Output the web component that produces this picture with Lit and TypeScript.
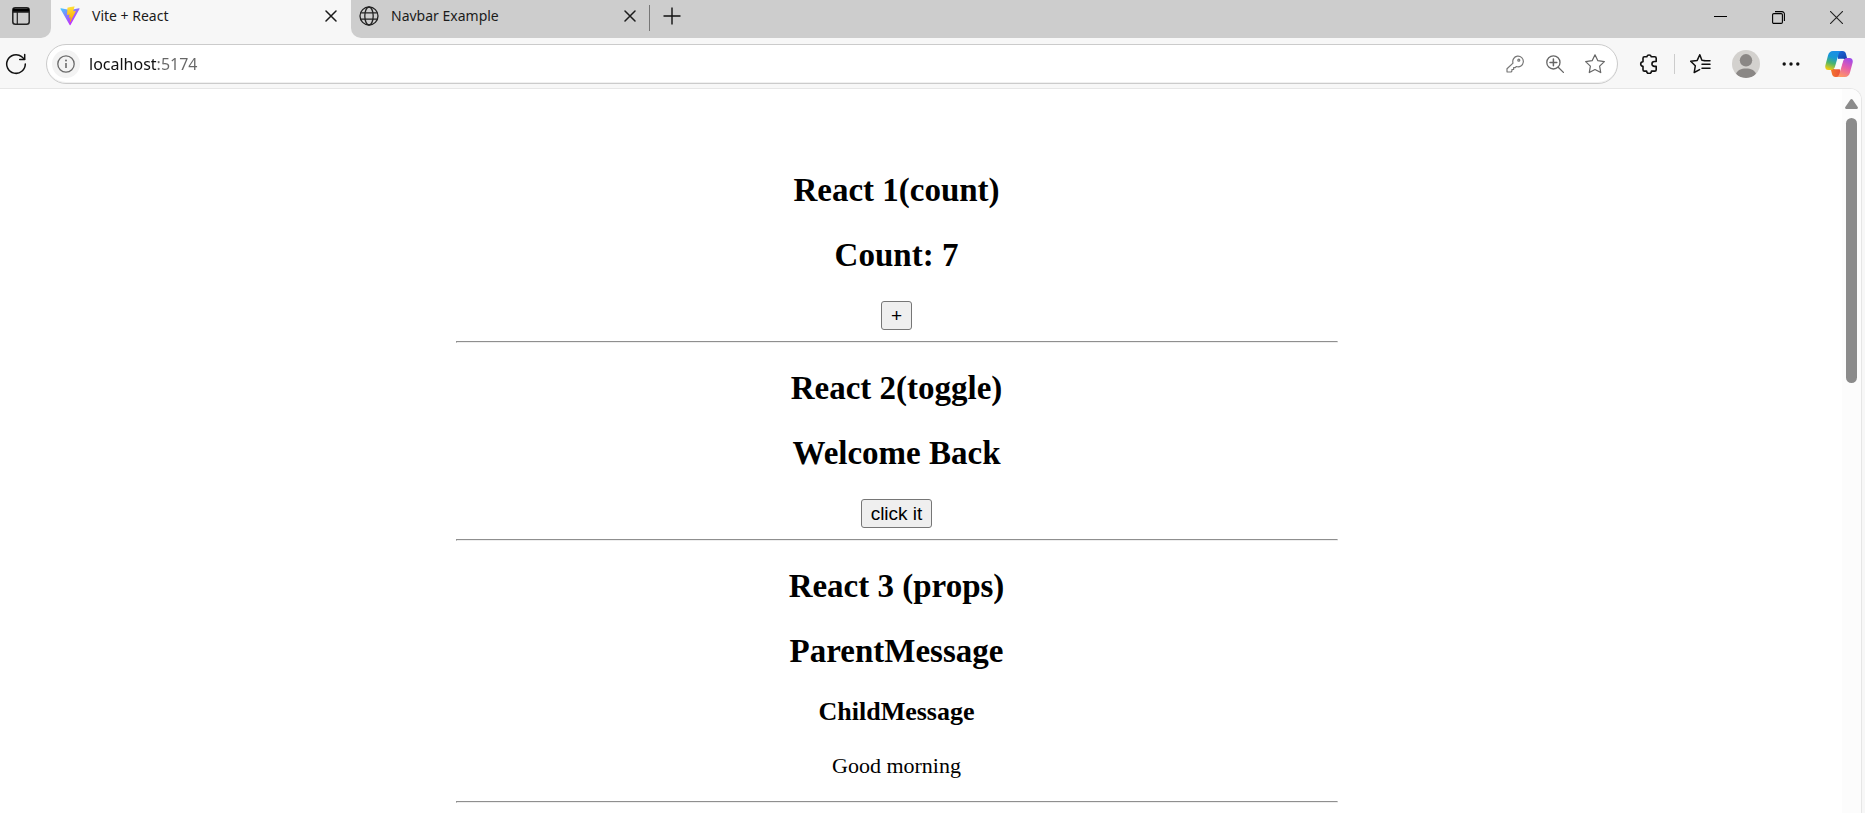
import { LitElement, html, css, svg } from "lit";
import { customElement, property, state } from "lit/decorators.js";

const closeIcon = html`<svg width="12" height="12" viewBox="0 0 12 12" fill="none" stroke="#1b1b1b" stroke-width="1.5" stroke-linecap="round"><path d="M1 1l10 10M11 1L1 11" /></svg>`;

const viteIcon = html`<svg width="20" height="20" viewBox="0 0 410 404" fill="none">
  <defs>
    <linearGradient id="v1" x1="6" y1="33" x2="235" y2="344" gradientUnits="userSpaceOnUse"><stop stop-color="#41d1ff" /><stop offset="1" stop-color="#bd34fe" /></linearGradient>
    <linearGradient id="v2" x1="194" y1="9" x2="236" y2="293" gradientUnits="userSpaceOnUse"><stop stop-color="#ffea83" /><stop offset="0.083" stop-color="#ffdd35" /><stop offset="1" stop-color="#ffa800" /></linearGradient>
  </defs>
  <path fill="url(#v1)" d="M399.641 59.525L215.643 388.545C211.844 395.338 202.084 395.378 198.228 388.618L10.582 59.556C6.381 52.19 12.68 43.267 21.028 44.759L205.223 77.682C206.398 77.892 207.601 77.89 208.776 77.676L389.119 44.806C397.439 43.289 403.768 52.143 399.641 59.525Z" />
  <path fill="url(#v2)" d="M292.965 1.574L156.801 28.255C154.563 28.694 152.906 30.59 152.771 32.866L144.395 174.33C144.198 177.662 147.258 180.248 150.51 179.498L188.42 170.749C191.967 169.931 195.172 173.055 194.443 176.622L183.18 231.775C182.422 235.487 185.907 238.661 189.532 237.56L212.947 230.446C216.577 229.344 220.065 232.527 219.297 236.242L201.398 322.875C200.278 328.294 207.486 331.249 210.492 326.603L212.5 323.5L323.454 102.072C325.312 98.365 322.108 94.137 318.036 94.923L279.014 102.454C275.347 103.161 272.227 99.746 273.262 96.158L298.731 7.867C299.767 4.273 296.636 0.855 292.965 1.574Z" />
</svg>`;

const globeIcon = html`<svg width="20" height="20" viewBox="0 0 20 20" fill="none" stroke="#222" stroke-width="1.3"><circle cx="10" cy="10" r="9" /><ellipse cx="10" cy="10" rx="4.2" ry="9" /><path d="M1.6 6.9h16.8M1.6 13.1h16.8" /></svg>`;

const starPath = svg`<path d="M10 1.6l2.6 5.4 5.9.8-4.3 4.1 1 5.9L10 15l-5.2 2.8 1-5.9L1.5 7.8 7.4 7z" />`;

@customElement("browser-tab")
export class BrowserTab extends LitElement {
  static styles = css`
    :host { display: flex; align-items: center; height: 32px; box-sizing: border-box; }
    .title { flex: 1; margin-left: 12px; font: 14px/20px "Noto Sans", "Open Sans", sans-serif; color: #1b1b1b; white-space: nowrap; }
    .icon, .close { display: flex; }
    .close { border: 0; padding: 4px; background: none; }
  `;
  @property() label = "";
  @property() icon = "";
  render() {
    return html`
      <span class="icon">${this.icon === "vite" ? viteIcon : globeIcon}</span>
      <span class="title">${this.label}</span>
      <button class="close" aria-label="Close tab">${closeIcon}</button>
    `;
  }
}

@customElement("browser-tab-strip")
export class BrowserTabStrip extends LitElement {
  static styles = css`
    :host { display: flex; height: 38px; background: #f7f7f7; }
    button { border: 0; padding: 0; background: none; display: flex; align-items: center; justify-content: center; }
    .start { width: 51px; background: #cdcdcd; border-radius: 0 0 10px 0; display: flex; }
    .start button { width: 42px; height: 32px; }
    .active { width: 300px; padding: 0 10px 0 9px; }
    .rest { flex: 1; display: flex; background: #cdcdcd; border-radius: 0 0 0 10px; }
    .other { width: 298px; padding: 0 9px 0 8px; }
    .divider { width: 1px; height: 26px; margin-top: 5px; background: #777; }
    .new { width: 43px; height: 32px; }
    .window { margin-left: auto; display: flex; }
    .window button { width: 58px; height: 34px; }
  `;
  render() {
    return html`
      <div class="start">
        <button aria-label="Tab actions">
          <svg width="18" height="18" viewBox="0 0 18 18" fill="none" stroke="#222" stroke-width="1.5"><rect x="0.8" y="0.8" width="16.4" height="16.4" rx="2.5" /><path d="M1 1.5h16v3.6H1z" fill="#000" stroke="none" /><path d="M1 5h16" /><path d="M5.3 5v12" stroke-width="1.2" /></svg>
        </button>
      </div>
      <browser-tab class="active" label="Vite + React" icon="vite"></browser-tab>
      <div class="rest">
        <browser-tab class="other" label="Navbar Example" icon="globe"></browser-tab>
        <div class="divider"></div>
        <button class="new" aria-label="New tab"><svg width="18" height="18" viewBox="0 0 18 18" stroke="#111" stroke-width="1.4"><path d="M9 .5v17M.5 9h17" /></svg></button>
        <div class="window">
          <button aria-label="Minimize"><svg width="13" height="13" viewBox="0 0 13 13" stroke="#000"><path d="M0 5.5h13" /></svg></button>
          <button aria-label="Restore"><svg width="13" height="13" viewBox="0 0 13 13" fill="none" stroke="#000" stroke-width="1.1"><rect x=".6" y="2.6" width="9.8" height="9.8" rx="1.2" /><path d="M3 .6h7a2.4 2.4 0 0 1 2.4 2.4v7" /></svg></button>
          <button aria-label="Close"><svg width="13" height="13" viewBox="0 0 13 13" stroke="#222" stroke-width="1.1"><path d="M0 0l13 13M13 0L0 13" /></svg></button>
        </div>
      </div>
    `;
  }
}

@customElement("browser-toolbar")
export class BrowserToolbar extends LitElement {
  static styles = css`
    :host { display: flex; align-items: center; padding: 6px 0 5px; background: #f7f7f7; }
    button { border: 0; padding: 0; background: none; display: flex; align-items: center; justify-content: center; width: 46px; height: 36px; flex: none; }
    .reload { width: 32px; margin-right: 14px; }
    .address { flex: 1; display: flex; align-items: center; height: 40px; margin-right: 8px; box-sizing: border-box; border: 1px solid #cbcbcb; border-radius: 20px; background: #fff; padding: 0 2px 0 5px; box-shadow: inset 0 -1px 0 #f0f0f0; }
    .address button { width: 40px; }
    .address .info { width: 28px; height: 28px; border-radius: 50%; background: #f3f3f3; }
    .url { flex: 1; min-width: 0; border: 0; outline: 0; padding: 0; margin-left: 9px; font: 16px/24px "Noto Sans", "Open Sans", sans-serif; color: transparent; background: linear-gradient(to right, #111 68px, #666 68px) text; }
    .divider { width: 1px; height: 20px; margin: 0 2px; background: #ccc; }
    .slot { width: 45px; }
    .copilot { width: 52px; }
  `;
  render() {
    return html`
      <button class="reload" aria-label="Reload"><svg width="22" height="22" viewBox="0 0 22 22" fill="none" stroke="#111" stroke-width="1.5" stroke-linecap="round" stroke-linejoin="round"><path d="M20.3 11a9.3 9.3 0 1 1-3.6-7.3l2.8 2.6" /><path d="M19.7 1.6v4.9h-5" /></svg></button>
      <div class="address">
        <button class="info" aria-label="Site information"><svg width="18" height="18" viewBox="0 0 18 18" fill="none" stroke="#6b6b6b" stroke-width="1.3"><circle cx="9" cy="9" r="8.2" /><path d="M9 8v5" stroke-width="1.6" /><circle cx="9" cy="5.6" r="1" fill="#6b6b6b" stroke="none" /></svg></button>
        <input class="url" aria-label="Address" value="localhost:5174" />
        <button aria-label="Passwords"><svg width="18" height="18" viewBox="0 0 18 18" fill="none" stroke="#777" stroke-width="1.2" stroke-linejoin="round"><path d="M11.4 1.2a5.3 5.3 0 1 1-1 10.3L9.2 12.7H7.6v1.8H5.9v1.6L5.1 17H1.6a.6.6 0 0 1-.6-.6v-2.6l6-5.7A5.4 5.4 0 0 1 11.4 1.2z" /><circle cx="12.8" cy="5.2" r="1" /></svg></button>
        <button aria-label="Zoom"><svg width="18" height="18" viewBox="0 0 18 18" fill="none" stroke="#666" stroke-width="1.3" stroke-linecap="round"><circle cx="7.4" cy="7.4" r="6.6" /><path d="M12.2 12.2l5.2 5.2" /><path d="M7.4 4v6.8M4 7.4h6.8" stroke-width="1.5" /></svg></button>
        <button aria-label="Favorite"><svg width="22" height="22" viewBox="0 0 20 20" fill="none" stroke="#666" stroke-width="1.1" stroke-linejoin="round">${starPath}</svg></button>
      </div>
      <button aria-label="Extensions"><svg width="20" height="20" viewBox="0 0 20 20" fill="none" stroke="#111" stroke-width="1.6" stroke-linejoin="round"><path d="M5.400 2.800h2.400a2.300 2.300 0 0 1 4.500 0h3.500c.9 0 1.400.6 1.400 1.400v3.300h-1.800a2.400 2.400 0 0 0 0 4.900h1.800v3.300c0 .9-.5 1.400-1.400 1.400h-3.300a2.300 2.300 0 0 1-4.900 0H5.400c-.9 0-1.400-.5-1.400-1.400v-3.400a2.300 2.300 0 0 1 0-4.600V4.200c0-.9.5-1.400 1.400-1.400z" /></svg></button>
      <div class="divider"></div>
      <button aria-label="Favorites"><svg width="22" height="22" viewBox="0 0 22 22" fill="none" stroke="#111" stroke-width="1.5" stroke-linejoin="round" stroke-linecap="round"><path d="M16.6 7.8l-3.7-.5L10.8 1.8 8.2 7.4 1.7 8.3l4.6 4.5-1.1 6.7 5.4-2.900M13 11.200h8M15 7.800h6M13 15.200h8" /></svg></button>
      <button class="slot" aria-label="Profile"><svg width="28" height="28" viewBox="0 0 28 28"><defs><clipPath id="a"><circle cx="14" cy="14" r="14" /></clipPath></defs><circle cx="14" cy="14" r="14" fill="#d3d1ce" /><g clip-path="url(#a)" fill="#8a8785"><circle cx="14" cy="10.3" r="6.2" /><path d="M4 24c1.500-4 5-5.500 10-5.500s8.500 1.500 10 5.500c-2 3-6 4-10 4s-8-1-10-4z" /></g></svg></button>
      <button class="slot" aria-label="Settings and more"><svg width="18" height="4" viewBox="0 0 18 4" fill="#111"><circle cx="2.200" cy="2" r="1.700" /><circle cx="9" cy="2" r="1.700" /><circle cx="15.800" cy="2" r="1.700" /></svg></button>
      <button class="copilot" aria-label="Copilot"><svg width="28" height="26" viewBox="0 0 28 26">
        <defs>
          <linearGradient id="l" x1="0.600" y1="0" x2="0.300" y2="1"><stop offset="0" stop-color="#1a8ee8" /><stop offset=".35" stop-color="#1799d4" /><stop offset=".65" stop-color="#4cb56c" /><stop offset="1" stop-color="#f2cc10" /></linearGradient>
          <linearGradient id="r" x1="0.700" y1="0" x2="0.300" y2="1"><stop offset="0" stop-color="#a04bea" /><stop offset=".45" stop-color="#e45bad" /><stop offset="1" stop-color="#ff9a62" /></linearGradient>
          <linearGradient id="t" x1="0" y1="0" x2="1" y2="1"><stop offset="0" stop-color="#1c6fe0" /><stop offset="1" stop-color="#123fa8" /></linearGradient>
          <linearGradient id="b" x1="0" y1="0" x2="1" y2="0"><stop offset="0" stop-color="#f4762a" /><stop offset="1" stop-color="#e84a3c" /></linearGradient>
        </defs>
        <path fill="url(#t)" d="M11 0h6.500c2 0 2.800 1 3.400 2.800L22.300 8h-9z" />
        <path fill="url(#b)" d="M17 26h-6.500c-2 0-2.800-1-3.400-2.800L5.700 18h9z" />
        <path fill="url(#l)" d="M8 0h9c-2 0-2.900 1.300-3.500 3.400L10 15.600c-.6 2-2 3.400-4 3.400H3.400C.8 19-.2 17 .4 14.200L3 4.500C3.800 1.600 5.400 0 8 0z" />
        <path fill="url(#r)" d="M20 26h-9c2 0 2.900-1.300 3.500-3.400L18 10.400c.6-2 2-3.400 4-3.400h2.600c2.600 0 3.600 2 3 4.800L25 21.500c-.8 2.900-2.400 4.500-5 4.500z" />
        <path fill="#fbfbfb" d="M14.500 7.800h4.300c-.6.700-1 1.600-1.300 2.600l-2.300 7.800H9.400c.600-.700 1-1.600 1.300-2.600l1.700-5.800c.3-1.200 1-2 2.100-2z" />
      </svg></button>
    `;
  }
}

@customElement("app-root")
export class AppRoot extends LitElement {
  static styles = css`
    :host { display: flex; flex-direction: column; height: 100vh; background: #f7f7f7; }
    browser-toolbar { flex: none; }
    .viewport { flex: 1; min-height: 0; display: flex; overflow: hidden; margin: -1px 3px 0 0; border: 1px solid #e6e6e6; border-width: 1px 1px 0 0; border-radius: 0 12px 0 0; background: #fff; }
    .page { flex: 1; overflow: hidden; box-sizing: border-box; padding: 82px 49px 0 0; }
    .column { max-width: 882px; margin: 0 auto; text-align: center; color: #000; font: 22px/26px "Liberation Serif", "Times New Roman", serif; }
    h2 { font-size: 33px; line-height: 38px; margin: 0 0 27px; }
    h3 { font-size: 26px; line-height: 30px; margin: 0 0 26px; }
    p { margin: 0 0 22px; }
    .action { display: block; margin: 0 auto 11px; height: 29px; padding: 0 9px; box-sizing: border-box; font: 19px/25px "Liberation Sans", Arial, sans-serif; color: #000; background: #efefef; border: 1px solid #767676; border-radius: 3px; }
    hr { margin: 0 0 26px; border: 1px solid; border-color: #8f8f8f #eee #eee #8f8f8f; }
    .scrollbar { width: 19px; flex: none; background: #fcfcfc; display: flex; flex-direction: column; align-items: center; gap: 9px; padding-top: 10px; box-sizing: border-box; }
    .thumb { width: 11px; height: 265px; border-radius: 6px; background: #8b8b8b; }
    svg { display: block; }
  `;
  @state() count = 7;
  @state() welcome = true;
  render() {
    return html`
      <browser-tab-strip></browser-tab-strip>
      <browser-toolbar></browser-toolbar>
      <div class="viewport">
        <main class="page">
          <div class="column">
            <h2>React 1(count)</h2>
            <h2>Count: ${this.count}</h2>
            <button class="action" @click=${() => this.count++}>+</button>
            <hr />
            <h2>React 2(toggle)</h2>
            <h2>${this.welcome ? "Welcome Back" : "Please log in"}</h2>
            <button class="action" @click=${() => (this.welcome = !this.welcome)}>click it</button>
            <hr />
            <h2>React 3 (props)</h2>
            <h2>ParentMessage</h2>
            <h3>ChildMessage</h3>
            <p>Good morning</p>
            <hr />
          </div>
        </main>
        <div class="scrollbar">
          <svg width="13" height="10" viewBox="0 0 13 10"><path d="M5.300.8a1.500 1.500 0 0 1 2.400 0l5 7.200c.5.800.2 2-1 2H1.300c-1.200 0-1.500-1.200-1-2z" fill="#8b8b8b" /></svg>
          <div class="thumb"></div>
        </div>
      </div>
    `;
  }
}
